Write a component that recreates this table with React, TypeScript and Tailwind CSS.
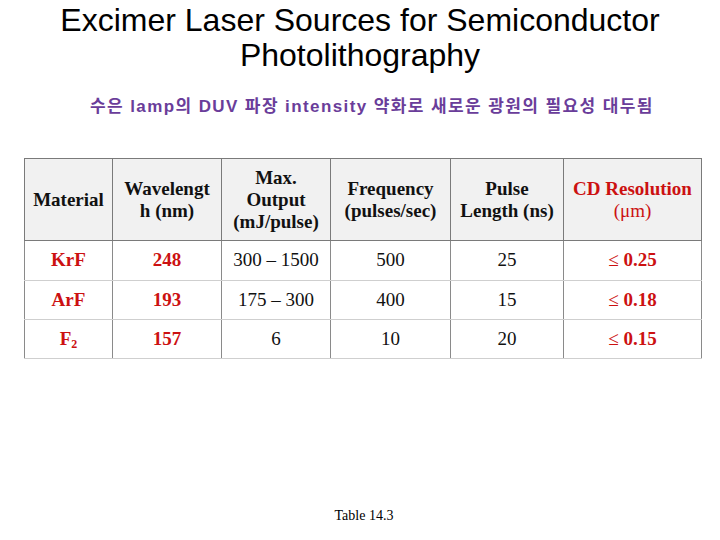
import React from "react";

const serif = { fontFamily: '"Liberation Serif", "Times New Roman", serif' };

export default function App() {
  const rows = [
    { m: "KrF", w: "248", o: "300 – 1500", f: "500", p: "25", cd: "0.25" },
    { m: "ArF", w: "193", o: "175 – 300", f: "400", p: "15", cd: "0.18" },
    { m: "F2", w: "157", o: "6", f: "10", p: "20", cd: "0.15" },
  ];
  const heights = ["h-[40px]", "h-[39px]", "h-[39px]"];
  return (
    <div className="w-[720px] h-[540px] bg-white relative overflow-hidden">
      <div
        className="pt-[3px] text-center text-[32px] leading-[35px] text-black"
        style={{ fontFamily: '"Liberation Sans", Arial, sans-serif' }}
      >
        <div>Excimer Laser Sources for Semiconductor</div>
        <div>Photolithography</div>
      </div>
      <div
        className="mt-[24px] ml-[90px] text-[17px] leading-[20px] tracking-[1.4px] font-bold text-[#6a3d9a]"
        style={{ fontFamily: '"Liberation Sans", Arial, "Noto Sans CJK KR", sans-serif' }}
      >
        수은 lamp의 DUV 파장 intensity 약화로 새로운 광원의 필요성 대두됨
      </div>
      <div className="mt-[41px] ml-[24px]" style={serif}>
        <table className="border-collapse table-fixed w-[677px] text-[19px]">
          <colgroup>
            <col className="w-[88px]" />
            <col className="w-[109px]" />
            <col className="w-[109px]" />
            <col className="w-[120px]" />
            <col className="w-[113px]" />
            <col className="w-[138px]" />
          </colgroup>
          <thead>
            <tr className="h-[82px] bg-[#f1f1f1] font-bold leading-[22px] text-[#111]">
              <th className="border border-[#7a7a7a] font-bold">Material</th>
              <th className="border border-[#7a7a7a] font-bold">
                Wavelengt
                <br />h (nm)
              </th>
              <th className="border border-[#7a7a7a] font-bold">
                Max.
                <br />
                Output
                <br />
                (mJ/pulse)
              </th>
              <th className="border border-[#7a7a7a] font-bold">
                Frequency
                <br />
                (pulses/sec)
              </th>
              <th className="border border-[#7a7a7a] font-bold">
                Pulse
                <br />
                Length (ns)
              </th>
              <th className="border border-[#7a7a7a] font-bold text-[#cc1111]">
                CD Resolution
                <br />
                <span className="font-normal">(μm)</span>
              </th>
            </tr>
          </thead>
          <tbody>
            {rows.map((r, i) => (
              <tr key={r.m} className={`${heights[i]} text-center`}>
                <td className="border-y border-y-[#cfcfcf] border-x border-x-[#8a8a8a] font-bold text-[#cc1111]">
                  {r.m === "F2" ? (
                    <span>
                      F<sub className="text-[12px]">2</sub>
                    </span>
                  ) : (
                    r.m
                  )}
                </td>
                <td className="border-y border-y-[#cfcfcf] border-x border-x-[#8a8a8a] font-bold text-[#cc1111]">
                  {r.w}
                </td>
                <td className="border-y border-y-[#cfcfcf] border-x border-x-[#8a8a8a] text-[#111]">
                  {r.o}
                </td>
                <td className="border-y border-y-[#cfcfcf] border-x border-x-[#8a8a8a] text-[#111]">
                  {r.f}
                </td>
                <td className="border-y border-y-[#cfcfcf] border-x border-x-[#8a8a8a] text-[#111]">
                  {r.p}
                </td>
                <td className="border-y border-y-[#cfcfcf] border-x border-x-[#8a8a8a] font-bold text-[#cc1111]">
                  <span className="font-normal">≤</span> {r.cd}
                </td>
              </tr>
            ))}
          </tbody>
        </table>
      </div>
      <div
        className="absolute left-0 right-0 top-[505px] text-center text-[14px] text-black pl-[8px]"
        style={serif}
      >
        Table 14.3
      </div>
    </div>
  );
}
